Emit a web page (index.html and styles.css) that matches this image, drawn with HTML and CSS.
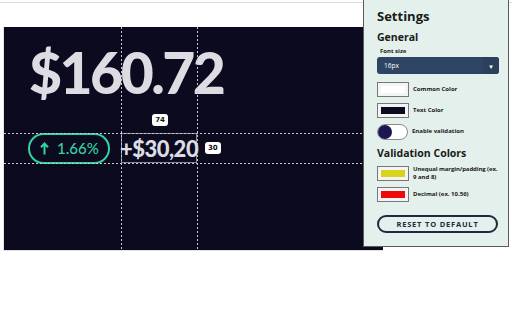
FILE: index.html
```html
<!DOCTYPE html>
<html lang="en">
<head>
    <meta charset="UTF-8">
    <meta name="viewport" content="width=device-width, initial-scale=1.0">
    <title>Price Inspector</title>
    <link rel="stylesheet" href="styles.css">
</head>
<body>
    <div class="topbar"></div>
    <main class="page">
        <section class="stage">
            <div class="grid">
                <div class="price">$160.72</div>
                <div class="cell-74"><span class="badge">74</span></div>
                <div class="cell-pill">
                    <div class="pill">
                        <svg width="9" height="13" viewBox="0 0 9 13"><path d="M4.5 12.5V2M1 5.2L4.5 1.5 8 5.2" fill="none" stroke="#34d3a2" stroke-width="2"/></svg>
                        <span>1.66%</span>
                    </div>
                </div>
                <div class="cell-change">+$30,20</div>
                <div class="cell-30"><span class="badge">30</span></div>
            </div>
            <!-- guides -->
            <div class="guide v" style="left: 117px"></div>
            <div class="guide v" style="left: 193px"></div>
            <div class="guide h" style="top: 106px"></div>
            <div class="guide h" style="top: 136px"></div>
        </section>
    </main>

    <aside class="settings">
        <h1>Settings</h1>
        <h2>General</h2>
        <label class="field-label">Font size</label>
        <div class="select">
            <span>16px</span>
            <span class="select-arrow">▾</span>
        </div>
        <div class="row">
            <span class="swatch"><i style="background: #ffffff"></i></span>
            <span class="row-label">Common Color</span>
        </div>
        <div class="row">
            <span class="swatch"><i style="background: #0b0a1f"></i></span>
            <span class="row-label">Text Color</span>
        </div>
        <div class="row toggle-row">
            <span class="toggle"><i></i></span>
            <span class="row-label">Enable validation</span>
        </div>
        <h2 class="section">Validation Colors</h2>
        <div class="row">
            <span class="swatch"><i style="background: #d8d41c"></i></span>
            <span class="row-label"><span class="nowrap">Unequal margin/padding (ex.</span><br>9 and 8)</span>
        </div>
        <div class="row">
            <span class="swatch"><i style="background: #ee0a0a"></i></span>
            <span class="row-label">Decimal (ex. 10.56)</span>
        </div>
        <button class="reset-btn">RESET TO DEFAULT</button>
    </aside>
</body>
</html>
```

FILE: styles.css
```css
body {
    margin: 0;
    padding: 0;
    background-color: #fff;
    font-family: "Open Sans", "DejaVu Sans", sans-serif;
    width: 512px;
    height: 320px;
    overflow: hidden;
    position: relative;
}
.topbar {
    height: 2px;
    border-bottom: 1px solid #dcdcdc;
}
.page {
    padding: 24px 0 0 3px;
}
.stage {
    position: relative;
    width: 379px;
    height: 223px;
    background-color: #0b0a1f;
    border-left: 1px solid #e2e2e2;
    border-bottom: 1px solid #e2e2e2;
}
.grid {
    display: grid;
    grid-template-columns: 117px 76px 1fr;
    grid-template-rows: 106px 30px 1fr;
    height: 100%;
}
.price {
    grid-column: 1 / 4;
    grid-row: 1;
    font-family: Lato, sans-serif;
    font-weight: 900;
    font-size: 57px;
    letter-spacing: -2.5px;
    color: #dcdce2;
    padding: 17px 0 0 25px;
    line-height: 1;
}
.cell-74 {
    grid-column: 2;
    grid-row: 1;
    display: flex;
    justify-content: center;
    align-items: flex-end;
    padding: 0 0 7px 2px;
}
.badge {
    display: inline-block;
    background-color: #fff;
    color: #111;
    font-family: "DejaVu Sans", sans-serif;
    font-weight: bold;
    font-size: 7px;
    line-height: 12px;
    padding: 0 3px;
    border-radius: 3px;
}
.cell-pill {
    grid-column: 1;
    grid-row: 2;
    display: flex;
    justify-content: flex-end;
    align-items: center;
    padding-right: 11px;
}
.pill {
    display: flex;
    align-items: center;
    gap: 8px;
    width: 82px;
    height: 31px;
    box-sizing: border-box;
    border: 2px solid #34d3a2;
    border-radius: 16px;
    padding-left: 10px;
    color: #34d3a2;
    font-family: Lato, sans-serif;
    font-size: 15px;
    font-weight: 500;
}
.cell-change {
    grid-column: 2;
    grid-row: 2;
    border: 1px solid #8a8a96;
    display: flex;
    align-items: center;
    justify-content: center;
    color: #dcdce2;
    font-family: Lato, sans-serif;
    font-weight: 900;
    font-size: 22px;
    letter-spacing: -0.5px;
}
.cell-30 {
    grid-column: 3;
    grid-row: 2;
    display: flex;
    align-items: center;
    padding-left: 8px;
}
.guide {
    position: absolute;
}
.guide.v {
    top: 0;
    bottom: 0;
    width: 1px;
    background: repeating-linear-gradient(to bottom, #c8c8d0 0 2px, transparent 2px 4px);
}
.guide.h {
    left: 0;
    right: 0;
    height: 1px;
    background: repeating-linear-gradient(to right, #c8c8d0 0 2px, transparent 2px 4px);
}
.settings {
    position: absolute;
    top: 0;
    left: 363px;
    width: 146px;
    height: 247px;
    box-sizing: border-box;
    background-color: #e3f0eb;
    border: 1px solid #5a5a5a;
    border-top: none;
    padding: 8px 10px 0 13px;
    color: #1a1a1a;
}
.settings h1 {
    margin: 0;
    font-size: 13px;
    line-height: 16px;
}
.settings h2 {
    margin: 6px 0 0;
    font-size: 10.5px;
    line-height: 14px;
}
.settings h2.section {
    margin-top: 6px;
}
.field-label {
    display: block;
    margin: 3px 0 0 3px;
    font-size: 6px;
    font-weight: bold;
    line-height: 9px;
}
.select {
    display: flex;
    justify-content: space-between;
    align-items: center;
    height: 17px;
    width: 122px;
    margin-top: 1px;
    background-color: #2d4562;
    border-radius: 3px;
    color: #fff;
    font-size: 6.5px;
    padding-left: 7px;
    box-sizing: border-box;
}
.select-arrow {
    width: 16px;
    text-align: center;
    font-size: 7px;
    align-self: stretch;
    line-height: 19px;
    background-color: #2a405b;
    border-radius: 0 3px 3px 0;
}
.row {
    display: flex;
    align-items: center;
    gap: 4px;
    margin-top: 6px;
}
.select + .row {
    margin-top: 8px;
}
.swatch {
    display: inline-block;
    width: 32px;
    height: 15px;
    box-sizing: border-box;
    border: 1px solid #777;
    background-color: #f4f4f4;
    padding: 3px;
    flex-shrink: 0;
}
.swatch i {
    display: block;
    height: 100%;
}
.row-label {
    font-size: 6px;
    font-weight: bold;
    line-height: 7.5px;
}
.nowrap {
    white-space: nowrap;
    letter-spacing: -0.1px;
}
.toggle-row {
    margin-top: 6px;
}
.toggle {
    display: inline-block;
    width: 31px;
    height: 16px;
    box-sizing: border-box;
    border: 1px solid #8a8a8a;
    border-radius: 8px;
    background-color: #fff;
    flex-shrink: 0;
}
.toggle i {
    display: block;
    width: 14px;
    height: 14px;
    border-radius: 50%;
    background-color: #1b1650;
}
.reset-btn {
    display: block;
    width: 121px;
    height: 18px;
    margin-top: 13px;
    border: 2px solid #1d2a44;
    border-radius: 9px;
    background: transparent;
    color: #1d2a44;
    font-family: "Open Sans", sans-serif;
    font-weight: bold;
    font-size: 7.5px;
    letter-spacing: 0.8px;
    padding: 0;
}
```
